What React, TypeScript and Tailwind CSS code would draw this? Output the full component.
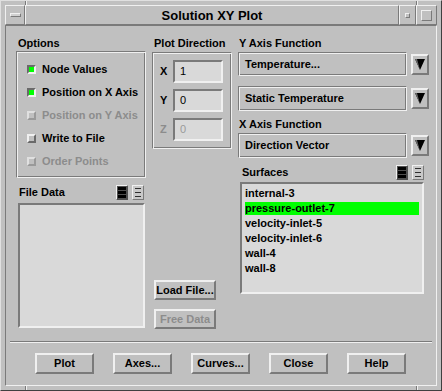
const raised = "border-2 border-t-[#f0f0f0] border-l-[#f0f0f0] border-b-[#7a7a7a] border-r-[#7a7a7a]";
const sunken = "border-2 border-t-[#7a7a7a] border-l-[#7a7a7a] border-b-[#f0f0f0] border-r-[#f0f0f0]";
const etched =
  "border border-t-[#7a7a7a] border-l-[#7a7a7a] border-b-[#f0f0f0] border-r-[#f0f0f0] shadow-[inset_1px_1px_0_#f0f0f0,inset_-1px_-1px_0_#7a7a7a]";
const thinRaised = "border border-t-[#f0f0f0] border-l-[#f0f0f0] border-b-[#7a7a7a] border-r-[#7a7a7a]";

function CheckRow({ label, checked, disabled }: { label: string; checked?: boolean; disabled?: boolean }) {
  return (
    <div className="flex h-[23px] items-center gap-[6px]">
      <div
        className={`h-[9px] w-[9px] ${
          checked
            ? "border-2 border-t-[#6a6a6a] border-l-[#6a6a6a] border-b-[#f0f0f0] border-r-[#f0f0f0] bg-[#00ff00]"
            : disabled
            ? "border-2 border-t-[#e0e0e0] border-l-[#e0e0e0] border-b-[#9a9a9a] border-r-[#9a9a9a] bg-[#c0c0c0]"
            : "border-2 border-t-[#f0f0f0] border-l-[#f0f0f0] border-b-[#6a6a6a] border-r-[#6a6a6a] bg-[#c0c0c0]"
        }`}
      />
      <span className={`text-[11px] font-bold ${disabled ? "text-[#8c8c8c]" : "text-black"}`}>{label}</span>
    </div>
  );
}

function ListIcons() {
  return (
    <div className="flex gap-[4px]">
      <div className="flex h-[15px] w-[12px] flex-col justify-center gap-[1px] border border-t-[#f0f0f0] border-l-[#f0f0f0] border-b-[#505050] border-r-[#505050] bg-[#505050] px-[1px]">
        <div className="h-[3px] bg-black" />
        <div className="h-[3px] bg-black" />
        <div className="h-[3px] bg-black" />
      </div>
      <div className={`flex h-[15px] w-[12px] flex-col justify-center gap-[3px] ${thinRaised} bg-[#c8c8c8] px-[2px]`}>
        <div className="h-[1px] bg-[#303030]" />
        <div className="h-[1px] bg-[#303030]" />
        <div className="h-[1px] bg-[#303030]" />
      </div>
    </div>
  );
}

function Arrow() {
  return (
    <div className={`flex h-[21px] w-[18px] items-center justify-center ${raised} bg-[#c0c0c0]`}>
      <svg width="10" height="11" viewBox="0 0 10 11">
        <polygon points="0,0 10,0 5,11" fill="#000" />
        <polygon points="0,0 2,0 5,11" fill="#6a6a6a" />
      </svg>
    </div>
  );
}

function OptionMenu({ text, className }: { text: string; className?: string }) {
  return (
    <div className={`flex items-center ${className ?? ""}`}>
      <div className={`flex h-full w-[169px] items-center pl-[6px] ${etched}`}>
        <span className="text-[11px] font-bold">{text}</span>
      </div>
      <div className="ml-[4px]">
        <Arrow />
      </div>
    </div>
  );
}

function Field({ axis, value, disabled }: { axis: string; value: string; disabled?: boolean }) {
  return (
    <div className="flex h-[23px] items-center">
      <span className={`w-[13px] text-[11px] font-bold ${disabled ? "text-[#8c8c8c]" : ""}`}>{axis}</span>
      <div className={`flex h-[23px] w-[50px] items-center pl-[5px] ${sunken} bg-[#d9d9d9]`}>
        <span className={`text-[11px] ${disabled ? "text-[#9a9a9a]" : ""}`}>{value}</span>
      </div>
    </div>
  );
}

function Btn({ label, disabled, className }: { label: string; disabled?: boolean; className?: string }) {
  return (
    <div className={`flex items-center justify-center ${raised} bg-[#c0c0c0] ${className ?? ""}`}>
      <span className={`text-[11px] font-bold ${disabled ? "text-[#8c8c8c]" : ""}`}>{label}</span>
    </div>
  );
}

export default function App() {
  const surfaces = ["internal-3", "pressure-outlet-7", "velocity-inlet-5", "velocity-inlet-6", "wall-4", "wall-8"];

  return (
    <div className="relative h-[391px] w-[442px] border border-t-[#e0e0e0] border-l-[#e0e0e0] border-b-[#404040] border-r-[#404040] bg-[#c0c0c0] p-[4px] font-['Liberation_Sans',Arial,sans-serif] leading-[13px] text-black select-none">
      {/* frame corner ticks */}
      <div className="absolute left-[24px] top-0 h-[4px] w-[2px] border-l border-l-[#7a7a7a] border-r border-r-[#f0f0f0]" />
      <div className="absolute left-[415px] top-0 h-[4px] w-[2px] border-l border-l-[#7a7a7a] border-r border-r-[#f0f0f0]" />
      <div className="absolute bottom-0 left-[24px] h-[4px] w-[2px] border-l border-l-[#7a7a7a] border-r border-r-[#f0f0f0]" />
      <div className="absolute bottom-0 left-[415px] h-[4px] w-[2px] border-l border-l-[#7a7a7a] border-r border-r-[#f0f0f0]" />

      {/* title bar */}
      <div className="flex h-[20px]">
        <div className={`flex w-[20px] items-center justify-center ${thinRaised}`}>
          <div className={`h-[4px] w-[11px] ${thinRaised} bg-[#d0d0d0]`} />
        </div>
        <div className={`flex flex-1 items-center justify-center ${thinRaised}`}>
          <span className="text-[13px] font-bold">Solution XY Plot</span>
        </div>
        <div className={`flex w-[17px] items-center justify-center ${thinRaised}`}>
          <div className={`h-[5px] w-[5px] ${thinRaised}`} />
        </div>
        <div className={`flex w-[21px] items-center justify-center ${thinRaised}`}>
          <div className={`h-[11px] w-[11px] ${thinRaised}`} />
        </div>
      </div>

      {/* client area */}
      <div className="h-[361px] border border-t-[#7a7a7a] border-l-[#7a7a7a] border-b-[#f0f0f0] border-r-[#f0f0f0]">
        <div className="flex h-[305px] pl-[10px] pt-[11px]">
          {/* left column */}
          <div className="flex w-[130px] flex-col">
            <div className="h-[13px] pl-[2px] text-[11px] font-bold">Options</div>
            <div className={`mt-[1px] h-[127px] pl-[10px] pt-[6px] ${etched}`}>
              <CheckRow label="Node Values" checked />
              <CheckRow label="Position on X Axis" checked />
              <CheckRow label="Position on Y Axis" disabled />
              <CheckRow label="Write to File" />
              <CheckRow label="Order Points" disabled />
            </div>
            <div className="mt-[7px] flex h-[15px] items-center justify-between pl-[3px] pr-[2px]">
              <span className="text-[11px] font-bold">File Data</span>
              <ListIcons />
            </div>
            <div className={`ml-[2px] mt-[3px] h-[125px] w-[127px] ${sunken} bg-[#d9d9d9]`} />
          </div>

          {/* middle column */}
          <div className="ml-[6px] flex w-[80px] flex-col">
            <div className="h-[13px] pl-[2px] text-[11px] font-bold">Plot Direction</div>
            <div className={`mt-[2px] flex h-[97px] flex-col gap-[6px] pl-[7px] pt-[7px] ${etched}`}>
              <Field axis="X" value="1" />
              <Field axis="Y" value="0" />
              <Field axis="Z" value="0" disabled />
            </div>
            <Btn label="Load File..." className="ml-[2px] mt-[131px] h-[20px] w-[62px]" />
            <Btn label="Free Data" disabled className="ml-[2px] mt-[9px] h-[20px] w-[62px]" />
          </div>

          {/* right column */}
          <div className="ml-[6px] flex w-[191px] flex-col">
            <div className="h-[13px] pl-[1px] text-[11px] font-bold">Y Axis Function</div>
            <OptionMenu text="Temperature..." className="mt-[2px] h-[24px]" />
            <OptionMenu text="Static Temperature" className="mt-[10px] h-[25px]" />
            <div className="mt-[7px] h-[13px] pl-[1px] text-[11px] font-bold">X Axis Function</div>
            <OptionMenu text="Direction Vector" className="mt-[2px] h-[25px]" />
            <div className="mt-[7px] flex h-[15px] items-center justify-between pl-[4px] pr-[5px]">
              <span className="text-[11px] font-bold">Surfaces</span>
              <ListIcons />
            </div>
            <div className={`ml-[2px] mt-[2px] h-[112px] w-[184px] ${sunken} bg-[#d9d9d9] pt-[2px]`}>
              {surfaces.map((s) => (
                <div key={s} className="h-[15px] py-[1px]">
                  <div
                    className={`mx-[3px] h-[13px] text-[11px] font-bold leading-[13px] ${
                      s === "pressure-outlet-7" ? "bg-[#00ff00]" : ""
                    }`}
                  >
                    {s}
                  </div>
                </div>
              ))}
            </div>
          </div>
        </div>

        {/* separator */}
        <div className="mx-[4px] mt-[10px] h-[2px] border-t border-t-[#7a7a7a] border-b border-b-[#f0f0f0]" />

        {/* bottom buttons */}
        <div className="mt-[10px] flex gap-[19px] pl-[29px]">
          {["Plot", "Axes...", "Curves...", "Close", "Help"].map((b) => (
            <Btn key={b} label={b} className="h-[21px] w-[59px]" />
          ))}
        </div>
      </div>
    </div>
  );
}
